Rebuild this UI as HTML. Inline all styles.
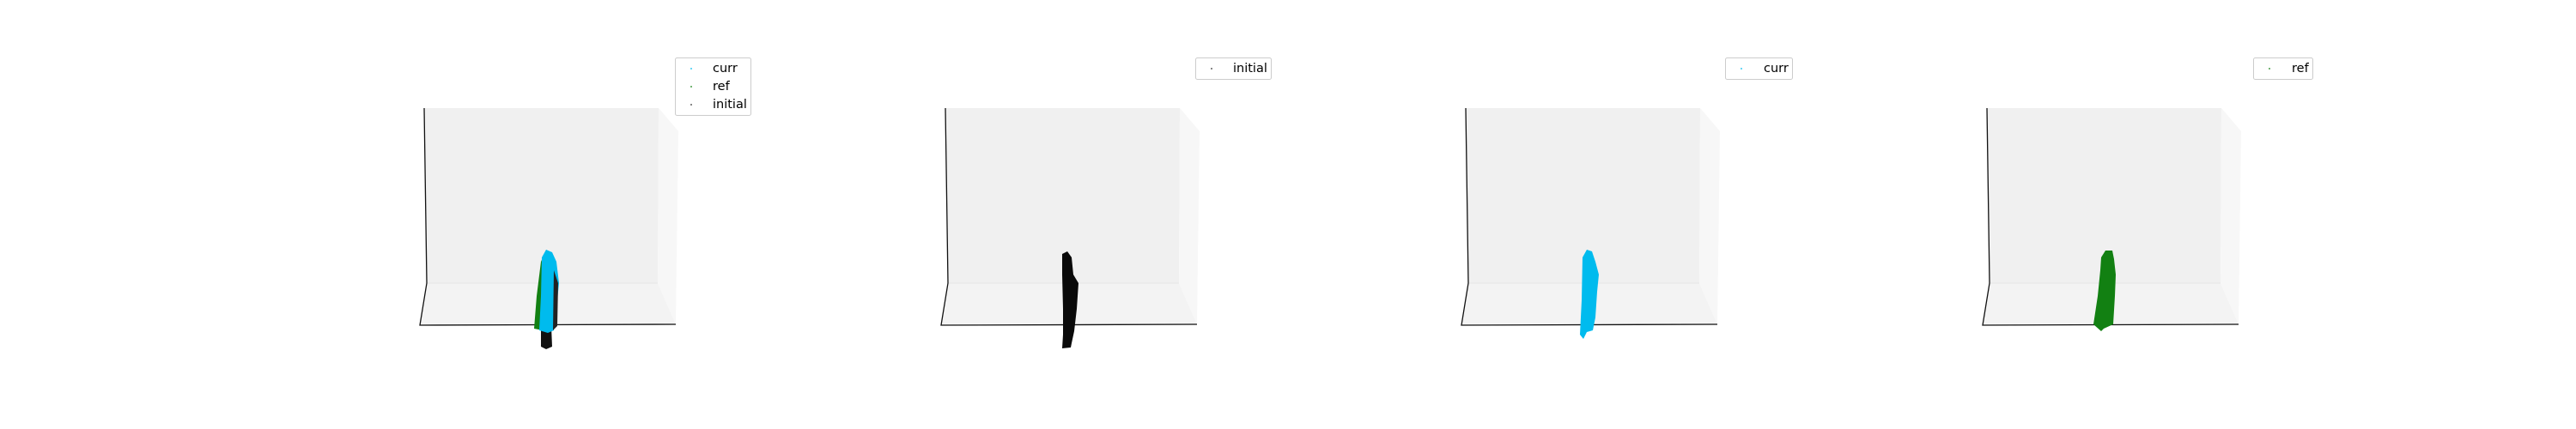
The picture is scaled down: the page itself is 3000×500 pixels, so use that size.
<!DOCTYPE html>
<html><head><style>
html,body{margin:0;padding:0;background:#fff;width:3000px;height:500px;overflow:hidden}
svg{display:block}
text{font-family:"DejaVu Sans","Liberation Sans",sans-serif;font-size:14.5px;fill:#000}
</style></head><body>
<svg width="3000" height="500" viewBox="0 0 3000 500">
<defs>
<g id="ax">
  <polygon points="494,126 767,126 766,330 497,330" fill="#f0f0f0"/>
  <polygon points="767,126 790,153 787,378 766,330" fill="#f7f7f7"/>
  <polygon points="497,330 766,330 787,378 489,379" fill="#f3f3f3"/>
  <line x1="497" y1="330" x2="766" y2="330" stroke="#e6e6e6" stroke-width="1"/>
  <polyline points="494,126 497,330 489,379 787,378" fill="none" stroke="#111" stroke-width="1.3"/>
</g>
</defs>
<use href="#ax"/>
<polygon points="630,380 642,380 643,404 636,407 630,404" fill="#111"/>
<polygon points="622,383 625,345 630,305 636,292 640,300 634,340 632,385" fill="#128012"/>
<polygon points="628,385 630,345 631,300 636,291 643,294 648,305 651,330 648,360 645,385 638,388" fill="#00bbee"/>
<polygon points="645,315 650,330 649,380 644,385" fill="#222"/>
<rect x="786.5" y="67.5" width="88" height="67" rx="2" fill="#fff" stroke="#ccc"/>
<circle cx="805" cy="80" r="0.9" fill="#00bbee"/><text x="830" y="84">curr</text>
<circle cx="805" cy="101" r="0.9" fill="#128012"/><text x="830" y="105">ref</text>
<circle cx="805" cy="122" r="0.9" fill="#333"/><text x="830" y="126">initial</text>
<use href="#ax" transform="translate(607,0)"/>
<polygon points="1237,296 1243,293 1248,300 1250,320 1256,330 1254,360 1251,386 1248,400 1247,405 1237,406 1238,390 1238,360 1237,320" fill="#0a0a0a"/>
<rect x="1392.5" y="67.5" width="88" height="25" rx="2" fill="#fff" stroke="#ccc"/>
<circle cx="1411" cy="80" r="0.9" fill="#333"/><text x="1436" y="84">initial</text>
<use href="#ax" transform="translate(1213,0)"/>
<polygon points="1840,390 1842,350 1843,300 1848,291 1854,293 1858,305 1862,320 1860,340 1858,370 1855,385 1848,387 1844,395" fill="#00bbee"/>
<rect x="2009.5" y="67.5" width="78" height="25" rx="2" fill="#fff" stroke="#ccc"/>
<circle cx="2028" cy="80" r="0.9" fill="#00bbee"/><text x="2054" y="84">curr</text>
<use href="#ax" transform="translate(1820,0)"/>
<polygon points="2438,378 2443,345 2446,315 2447,300 2452,292 2460,292 2462,302 2464,320 2463,345 2461,378 2450,383 2447,386" fill="#128012"/>
<rect x="2624.5" y="67.5" width="69" height="25" rx="2" fill="#fff" stroke="#ccc"/>
<circle cx="2643" cy="80" r="0.9" fill="#128012"/><text x="2669" y="84">ref</text>
</svg>
</body></html>
